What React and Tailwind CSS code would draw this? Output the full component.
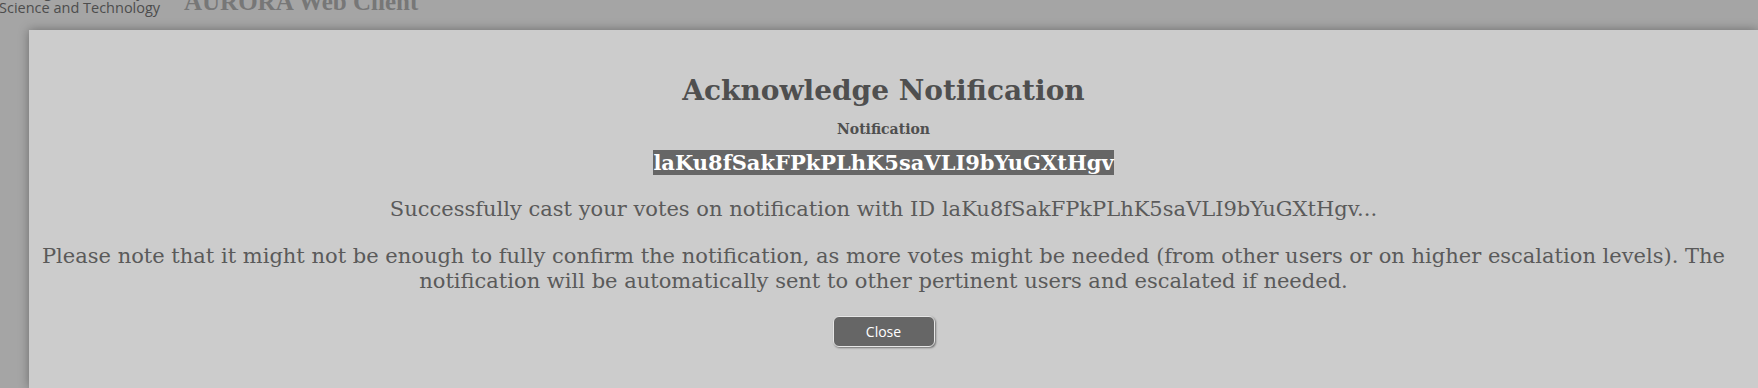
export default function App() {
  const id = "laKu8fSakFPkPLhK5saVLI9bYuGXtHgv";

  return (
    <div className="w-[1758px] h-[388px] overflow-hidden bg-[#a5a5a5] flex flex-col">
      {/* dimmed page header, scrolled partly out of view */}
      <header className="h-[30px] shrink-0 flex items-end gap-[23px] overflow-hidden">
        <div className="-ml-[1px] pb-[14px] font-['Open_Sans',sans-serif] text-[14.5px] leading-[16px] text-[#4d4d4d]">
          <div>Norwegian University of</div>
          <div>Science and Technology</div>
        </div>
        <div className="pb-[14px] font-['Liberation_Serif',serif] font-bold text-[25px] leading-[28px] text-[#777777]">
          AURORA Web Client
        </div>
      </header>

      {/* modal */}
      <div className="ml-[29px] flex-1 bg-[#cccccc] shadow-[0_0_10px_rgba(0,0,0,0.35)] pl-[8px] pr-[28px] pt-[43px] text-center font-['DejaVu_Serif',serif] text-[#555555]">
        <h1 className="text-[28px] font-bold leading-[35px] text-[#4f4f4f]">Acknowledge Notification</h1>
        <div className="mt-[12px] text-[14px] font-bold leading-[18px] text-[#4f4f4f]">Notification</div>
        <div className="mt-[12px] text-[21px] font-bold leading-[26px]">
          <span className="bg-[#666666] text-white">{id}</span>
        </div>
        <p className="mt-[21px] text-[21px] leading-[25px] text-[#5a5a5a]">
          Successfully cast your votes on notification with ID {id}...
        </p>
        <p className="mt-[22px] text-[21px] leading-[25px] text-[#5a5a5a]">
          Please note that it might not be enough to fully confirm the notification, as more votes might be needed (from other
          users or on higher escalation levels). The notification will be automatically sent to other pertinent users and
          escalated if needed.
        </p>
        <div className="mt-[22px] flex justify-center">
          <button className="w-[102px] h-[31px] rounded-[6px] bg-[#666666] border border-[#e6e6e6] shadow-[1px_1px_2px_rgba(0,0,0,0.45)] font-['Open_Sans',sans-serif] text-[14px] text-white">
            Close
          </button>
        </div>
      </div>
    </div>
  );
}
